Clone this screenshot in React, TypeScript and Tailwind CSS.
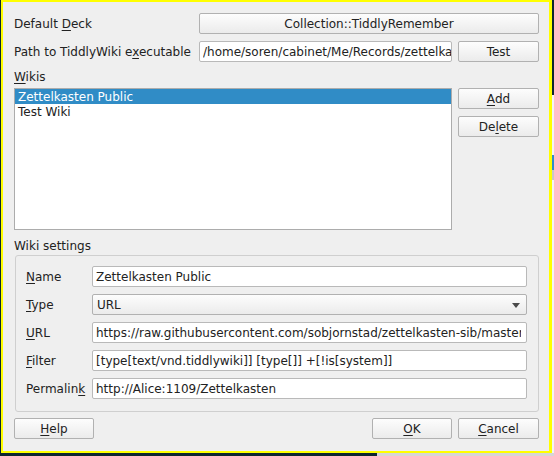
import React from "react";

const U = ({ children }: { children: React.ReactNode }) => (
  <span className="underline decoration-1 underline-offset-[2px]">{children}</span>
);

function Btn({ children, className = "" }: { children: React.ReactNode; className?: string }) {
  return (
    <div
      className={`flex items-center justify-center h-[21px] shrink-0 pt-[2px] rounded-[2px] border border-[#b1b1b1] bg-linear-to-b from-[#fdfdfd] to-[#ebebeb] text-[#222222] ${className}`}
    >
      {children}
    </div>
  );
}

function Field({ children, className = "" }: { children: React.ReactNode; className?: string }) {
  return (
    <div
      className={`h-[21px] shrink-0 overflow-hidden rounded-[2px] border border-[#b9b9b9] bg-white pl-[3px] pr-[5px] text-[#222222] ${className}`}
    >
      <div className="h-full overflow-hidden whitespace-nowrap pt-[2px] leading-[17px]">{children}</div>
    </div>
  );
}

function SettingRow({ label, children }: { label: React.ReactNode; children: React.ReactNode }) {
  return (
    <div className="flex items-center h-[21px]">
      <div className="w-[66px] shrink-0 whitespace-nowrap pt-[2px]">{label}</div>
      {children}
    </div>
  );
}

export default function App() {
  return (
    <div className="relative w-[554px] h-[456px] overflow-hidden bg-[#0e2630] font-['DejaVu_Sans',sans-serif] text-[12px] leading-[17px] text-[#222222]">
      {/* background window bits */}
      <div className="absolute left-[552px] top-[95px] w-[2px] h-[361px] bg-[#f4f4f4]" />
      <div className="absolute left-[552px] top-[155px] w-[2px] h-[15px] bg-[#308cc6]" />
      <div className="absolute left-[552px] top-[170px] w-[2px] h-[10px] bg-[#c8c8c8]" />
      <div className="absolute left-[377px] top-[453px] w-[177px] h-[3px] bg-[#d6d6d6]" />

      {/* dialog window */}
      <div className="absolute left-[1px] top-0 w-[551px] h-[453px] border-l-2 border-t-2 border-b-2 border-r-[3px] border-[#ffff00] bg-[#efefef] pl-[11px] pr-[10px] pt-[11px] flex flex-col">
        {/* Default Deck */}
        <div className="flex items-center h-[21px]">
          <div className="w-[185px] shrink-0 pt-[2px]">
            Default <U>D</U>eck
          </div>
          <Btn className="w-[340px]">Collection::TiddlyRemember</Btn>
        </div>

        {/* Path */}
        <div className="flex items-center h-[21px] mt-[7px]">
          <div className="w-[185px] shrink-0 whitespace-nowrap pt-[2px]">
            Path to TiddlyWiki e<U>x</U>ecutable
          </div>
          <Field className="w-[253px] !pr-0">/home/soren/cabinet/Me/Records/zettelkasten</Field>
          <Btn className="w-[81px] ml-[6px]">Test</Btn>
        </div>

        {/* Wikis */}
        <div className="mt-[7px] h-[17px]">
          <U>W</U>ikis
        </div>
        <div className="flex mt-[2px]">
          <div className="w-[439px] h-[142px] border border-[#acacac] bg-white">
            <div className="h-[15px] leading-[16px] bg-[#308cc6] text-white pl-[3px]">Zettelkasten Public</div>
            <div className="h-[15px] leading-[16px] pl-[3px]">Test Wiki</div>
          </div>
          <div className="flex flex-col ml-[6px]">
            <Btn className="w-[81px]">
              <U>A</U>dd
            </Btn>
            <Btn className="w-[81px] mt-[7px]">
              De<U>l</U>ete
            </Btn>
          </div>
        </div>

        {/* Wiki settings */}
        <div className="mt-[8px] h-[17px]">Wiki settings</div>
        <div className="ml-[1px] w-[524px] h-[157px] rounded-[3px] border border-[#cfcfcf] pl-[10px] pr-[11px] pt-[10px] flex flex-col gap-[7px]">
          <SettingRow
            label={
              <>
                <U>N</U>ame
              </>
            }
          >
            <Field className="flex-1">Zettelkasten Public</Field>
          </SettingRow>
          <SettingRow
            label={
              <>
                <U>T</U>ype
              </>
            }
          >
            <div className="relative flex-1 h-[21px] rounded-[2px] border border-[#b1b1b1] bg-linear-to-b from-[#fdfdfd] to-[#ebebeb] pl-[4px] pt-[2px] leading-[17px]">
              URL
              <svg className="absolute right-[6px] top-[8px]" width="8" height="5" viewBox="0 0 8 5">
                <polygon points="0,0 8,0 4,5" fill="#4a4a4a" />
              </svg>
            </div>
          </SettingRow>
          <SettingRow
            label={
              <>
                <U>U</U>RL
              </>
            }
          >
            <Field className="flex-1">
              https://raw.githubusercontent.com/sobjornstad/zettelkasten-sib/master/output/zettelkasten.html
            </Field>
          </SettingRow>
          <SettingRow
            label={
              <>
                <U>F</U>ilter
              </>
            }
          >
            <Field className="flex-1">[type[text/vnd.tiddlywiki]] [type[]] +[!is[system]]</Field>
          </SettingRow>
          <SettingRow
            label={
              <>
                Permalin<U>k</U>
              </>
            }
          >
            <Field className="flex-1">http://Alice:1109/Zettelkasten</Field>
          </SettingRow>
        </div>

        {/* bottom buttons */}
        <div className="flex mt-[6px]">
          <Btn className="w-[80px]">
            <U>H</U>elp
          </Btn>
          <div className="flex-1" />
          <Btn className="w-[80px]">
            <U>O</U>K
          </Btn>
          <Btn className="w-[81px] ml-[6px]">
            <U>C</U>ancel
          </Btn>
        </div>
      </div>
    </div>
  );
}
